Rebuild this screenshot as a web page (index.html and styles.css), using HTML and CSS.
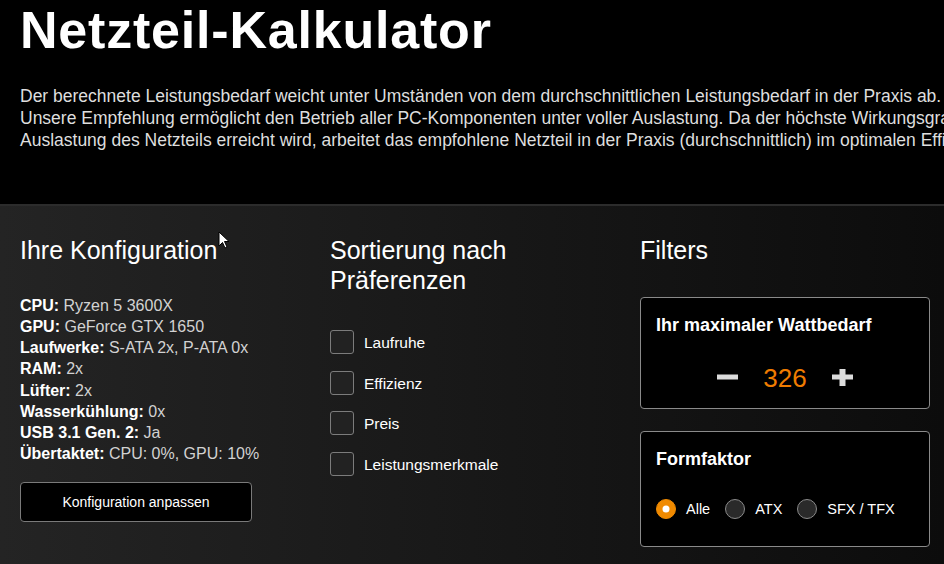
FILE: index.html
```
<!DOCTYPE html>
<html lang="de">
<head>
    <meta charset="UTF-8">
    <meta name="viewport" content="width=device-width, initial-scale=1.0">
    <title>Netzteil-Kalkulator</title>
    <link rel="stylesheet" href="styles.css">
</head>
<body>
    <header class="intro">
        <h1>Netzteil-Kalkulator</h1>
        <p class="intro-text">
            <span>Der berechnete Leistungsbedarf weicht unter Umständen von dem durchschnittlichen Leistungsbedarf in der Praxis ab.</span>
            <span>Unsere Empfehlung ermöglicht den Betrieb aller PC-Komponenten unter voller Auslastung. Da der höchste Wirkungsgrad bei ca. 50 %</span>
            <span>Auslastung des Netzteils erreicht wird, arbeitet das empfohlene Netzteil in der Praxis (durchschnittlich) im optimalen Effizienzbereich.</span>
        </p>
    </header>

    <main class="calculator">
        <section class="column">
            <h2>Ihre Konfiguration</h2>
            <ul class="config-list">
                <li><strong>CPU:</strong> Ryzen 5 3600X</li>
                <li><strong>GPU:</strong> GeForce GTX 1650</li>
                <li><strong>Laufwerke:</strong> S-ATA 2x, P-ATA 0x</li>
                <li><strong>RAM:</strong> 2x</li>
                <li><strong>Lüfter:</strong> 2x</li>
                <li><strong>Wasserkühlung:</strong> 0x</li>
                <li><strong>USB 3.1 Gen. 2:</strong> Ja</li>
                <li><strong>Übertaktet:</strong> CPU: 0%, GPU: 10%</li>
            </ul>
            <button class="btn-outline">Konfiguration anpassen</button>
        </section>

        <section class="column">
            <h2 class="sort-title">Sortierung nach<br>Präferenzen</h2>
            <div class="checks">
                <label class="check"><input type="checkbox"><span class="box"></span>Laufruhe</label>
                <label class="check"><input type="checkbox"><span class="box"></span>Effizienz</label>
                <label class="check"><input type="checkbox"><span class="box"></span>Preis</label>
                <label class="check"><input type="checkbox"><span class="box"></span>Leistungsmerkmale</label>
            </div>
        </section>

        <section class="column">
            <h2 class="filters-title">Filters</h2>
            <div class="filter-card">
                <h3>Ihr maximaler Wattbedarf</h3>
                <div class="stepper">
                    <button class="step" aria-label="Weniger">
                        <svg width="21" height="17" viewBox="0 0 21 17"><rect x="0" y="5.5" width="21" height="5" fill="#dcdcdc"/></svg>
                    </button>
                    <span class="watt">326</span>
                    <button class="step" aria-label="Mehr">
                        <svg width="21" height="17" viewBox="0 0 21 17"><rect x="0" y="5.5" width="21" height="5" fill="#dcdcdc"/><rect x="7.5" y="0" width="6" height="17" fill="#dcdcdc"/></svg>
                    </button>
                </div>
            </div>
            <div class="filter-card form-card">
                <h3>Formfaktor</h3>
                <div class="radios">
                    <label class="radio"><input type="radio" name="form" checked><span class="dot"></span>Alle</label>
                    <label class="radio"><input type="radio" name="form"><span class="dot"></span>ATX</label>
                    <label class="radio"><input type="radio" name="form"><span class="dot"></span>SFX / TFX</label>
                </div>
            </div>
        </section>
    </main>

    <!-- mouse pointer that was in the screenshot -->
    <svg class="pointer" width="12" height="19" viewBox="0 0 12 19">
        <path d="M1 1 L1 15 L4.5 11.5 L7 17 L9 16 L6.5 10.5 L11 10.5 Z" fill="#fff" stroke="#000" stroke-width="1"/>
    </svg>
</body>
</html>
```

FILE: styles.css
```
* {
    box-sizing: border-box;
}
html, body {
    margin: 0;
    height: 100%;
}
body {
    font-family: "Liberation Sans", Arial, sans-serif;
    color: #fff;
    background: linear-gradient(to right, #242424, #0c0c0c);
    overflow: hidden;
    position: relative;
}
.intro {
    background-color: #000;
    padding: 0 20px;
    height: 204px;
}
h1 {
    margin: 0;
    font-size: 52px;
    line-height: 60px;
    letter-spacing: 0.8px;
    font-weight: bold;
    white-space: nowrap;
}
.intro-text {
    margin: 25px 0 0;
    font-size: 17.5px;
    line-height: 22px;
    color: #dedede;
    white-space: nowrap;
}
.intro-text span {
    display: block;
}
.calculator {
    border-top: 2px solid #2c2c2c;
    padding: 29px 20px 0;
    display: grid;
    grid-template-columns: 290px 290px 290px;
    column-gap: 20px;
}
h2 {
    margin: 0 0 30px;
    font-size: 25px;
    line-height: 30px;
    font-weight: normal;
    white-space: nowrap;
}
.sort-title {
    margin-bottom: 35px;
}
.filters-title {
    margin-bottom: 32px;
}
.config-list {
    list-style: none;
    margin: 0 0 18px;
    padding: 0;
    font-size: 16px;
    line-height: 21.12px;
    color: #d2d2d2;
}
.config-list strong {
    color: #fff;
}
.btn-outline {
    width: 232px;
    height: 40px;
    background-color: #000;
    color: #fff;
    border: 1px solid #7a7a7a;
    border-radius: 4px;
    font-family: inherit;
    font-size: 14px;
    cursor: pointer;
}
.checks {
    display: flex;
    flex-direction: column;
    gap: 16.7px;
}
.check {
    display: flex;
    align-items: center;
    gap: 10px;
    font-size: 15.5px;
    height: 24px;
    padding-top: 2px;
    cursor: pointer;
}
.check input,
.radio input {
    display: none;
}
.check .box {
    width: 24px;
    height: 24px;
    margin-top: -2px;
    border: 1px solid #7c7c7c;
    border-radius: 3px;
    background-color: #222;
}
.filter-card {
    background-color: #000;
    border: 1px solid #8a8a8a;
    border-radius: 4px;
    padding: 17px 15px 16px;
    height: 112px;
}
.form-card {
    margin-top: 22px;
    height: 116px;
}
h3 {
    margin: 0 0 27px;
    font-size: 18px;
    line-height: 20.7px;
    font-weight: bold;
}
.form-card h3 {
    margin-bottom: 29px;
}
.stepper {
    display: flex;
    justify-content: center;
    align-items: center;
    gap: 25px;
    height: 30px;
}
.step {
    background: none;
    border: none;
    padding: 0;
    width: 21px;
    height: 17px;
    display: flex;
    cursor: pointer;
}
.watt {
    font-size: 26px;
    line-height: 30px;
    color: #f07c00;
}
.radios {
    display: flex;
    align-items: center;
    gap: 15px;
    height: 20px;
}
.radio {
    display: flex;
    align-items: center;
    gap: 10px;
    font-size: 14.5px;
    cursor: pointer;
}
.radio .dot {
    width: 20px;
    height: 20px;
    border-radius: 50%;
    border: 1px solid #8a8a8a;
    background-color: #2a2a2a;
    position: relative;
}
.radio input:checked + .dot {
    background-color: #f08a00;
    border-color: #f08a00;
}
.radio input:checked + .dot::after {
    content: "";
    position: absolute;
    width: 7px;
    height: 7px;
    border-radius: 50%;
    background-color: #fff;
    top: 50%;
    left: 50%;
    transform: translate(-50%, -50%);
}
.pointer {
    position: absolute;
    left: 218px;
    top: 231px;
}
```
